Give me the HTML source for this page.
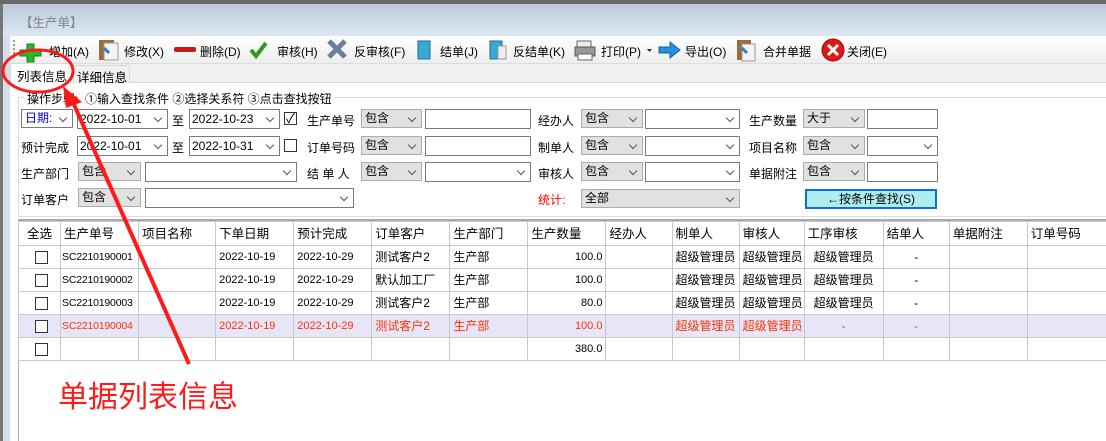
<!DOCTYPE html>
<html><head><style>
body{margin:0;width:1106px;height:441px;overflow:hidden;background:#fff;font-family:"Liberation Sans","Noto Sans CJK SC",sans-serif;font-size:12px;color:#000;position:relative}
.a{position:absolute;white-space:nowrap}
.sel{position:absolute;height:19px;border:1px solid #adadad;background:#e1e1e1;box-sizing:border-box;padding-left:3px;line-height:17px}
.box{position:absolute;height:20px;border:1px solid #7a7a7a;background:#fff;box-sizing:border-box;padding-left:2px;line-height:18px}
.dd:after{content:"";position:absolute;right:6px;top:5px;width:5px;height:5px;border-right:1px solid #555;border-bottom:1px solid #555;transform:rotate(45deg)}
.cb{position:absolute;width:11px;height:11px;border:1px solid #333;background:#fff}
table{border-collapse:collapse;position:absolute;left:18px;top:221px;table-layout:fixed;width:1091px;font-size:12px}
td{border:1px solid #c8c8c8;height:22px;padding:0 3px;white-space:nowrap;overflow:hidden;line-height:22px;box-sizing:border-box}
tr.h td{height:24px;font-size:12.5px}
.r td{color:#ff3300;background:#e6e6f8}
.n{text-align:right;font-size:11px}
.m{font-size:11px}
.s{font-size:10.5px;padding:0 1px;letter-spacing:-0.2px}
</style></head><body>
<div class="a" style="left:0;top:0;width:1106px;height:4px;background:#6a6a6a"></div>
<div class="a" style="left:0;top:4px;width:1106px;height:32px;background:linear-gradient(#bccadb,#dde7f2)"></div>
<div class="a" style="left:0;top:4px;width:3px;height:437px;background:#777"></div>
<div class="a" style="left:3px;top:36px;width:7px;height:405px;background:#d4e0ee"></div>
<div class="a" style="left:20px;top:12px;color:#7d8590;font-size:12.5px">【生产单】</div>
<div class="a" style="left:10px;top:36px;width:1096px;height:27px;background:linear-gradient(#fff,#eeeeee);border-bottom:1px solid #ddd"></div>
<div class="a" style="left:13px;top:40px;width:2px;height:18px;border-left:2px dotted #999"></div>
<svg class="a" style="left:0;top:36px" width="1106" height="27">
<path d="M27 8h7v6h7v6h-7v6h-7v-6h-7v-6h7z" fill="#28b828" stroke="#137d13"/>
<rect x="99" y="4" width="15" height="20" fill="#9a6b3b"/><rect x="104" y="7" width="14" height="17" fill="#f4f4f4" stroke="#999"/><path d="M104 12l5 5" stroke="#2a7fd0" stroke-width="3"/>
<rect x="174" y="11" width="22" height="5" rx="2" fill="#c81818"/>
<path d="M251 14l5 6 10-13" stroke="#2f9a1e" stroke-width="4" fill="none"/>
<path d="M329 5l16 16M345 5l-16 16" stroke="#6a8099" stroke-width="5"/>
<rect x="418" y="5" width="12" height="18" fill="#3aaad4" stroke="#1d6f92"/>
<rect x="490" y="5" width="12" height="18" fill="#3aaad4" stroke="#1d6f92"/><rect x="498" y="10" width="8" height="13" fill="#eee" stroke="#999"/>
<rect x="577" y="5" width="14" height="7" fill="#eee" stroke="#666"/><rect x="575" y="11" width="20" height="9" fill="#999" stroke="#555"/><rect x="578" y="18" width="14" height="6" fill="#fff" stroke="#666"/>
<path d="M647 13h5l-2.5 3z" fill="#333"/>
<path d="M659 11h11v-5l10 8-10 8v-5h-11z" fill="#2b8fe0" stroke="#1360a8"/>
<rect x="737" y="4" width="14" height="20" fill="#9a6b3b"/><rect x="742" y="8" width="13" height="17" fill="#f4f4f4" stroke="#999"/><path d="M742 12l5 5" stroke="#2a7fd0" stroke-width="3"/>
<circle cx="833" cy="14" r="11" fill="#e01818" stroke="#9a0c0c"/><path d="M828 9l10 10M838 9l-10 10" stroke="#fff" stroke-width="3"/>
</svg>
<div class="a" style="left:49px;top:43px">增加(A)</div>
<div class="a" style="left:124px;top:43px">修改(X)</div>
<div class="a" style="left:200px;top:43px">删除(D)</div>
<div class="a" style="left:277px;top:43px">审核(H)</div>
<div class="a" style="left:354px;top:43px">反审核(F)</div>
<div class="a" style="left:440px;top:43px">结单(J)</div>
<div class="a" style="left:513px;top:43px">反结单(K)</div>
<div class="a" style="left:601px;top:43px">打印(P)</div>
<div class="a" style="left:685px;top:43px">导出(O)</div>
<div class="a" style="left:763px;top:43px">合并单据</div>
<div class="a" style="left:847px;top:43px">关闭(E)</div>
<div class="a" style="left:10px;top:64px;width:1096px;height:18px;background:#f0f0f0;border-bottom:1px solid #d9d9d9"></div>
<div class="a" style="left:10px;top:63px;width:62px;height:20px;background:#fff;border:1px solid #d9d9d9;border-bottom:none"></div>
<div class="a" style="left:17px;top:66px;font-size:12.5px">列表信息</div>
<div class="a" style="left:73px;top:65px;width:55px;height:17px;background:#f0f0f0;border:1px solid #d9d9d9;border-bottom:none"></div>
<div class="a" style="left:77px;top:67px;font-size:12.5px">详细信息</div>
<div class="a" style="left:18px;top:97px;width:1088px;height:118px;border:1px solid #dcdcdc;border-right:none"></div>
<div class="a" style="left:24px;top:90px;background:#fff;padding:0 3px">操作步骤:&nbsp;&nbsp;①输入查找条件 ②选择关系符 ③点击查找按钮</div>
<!-- row1 -->
<div class="sel dd" style="left:21px;top:109px;width:52px;background:#fff;color:#0000e0;border-color:#7a7a7a">日期:</div>
<div class="box dd" style="left:77px;top:109px;width:91px">2022-10-01</div>
<div class="a" style="left:172px;top:112px">至</div>
<div class="box dd" style="left:189px;top:109px;width:91px">2022-10-23</div>
<div class="cb" style="left:284px;top:112px"></div><div class="a" style="left:286px;top:108px;font-size:13px">✓</div>
<div class="a" style="left:307px;top:112px">生产单号</div>
<div class="sel dd" style="left:361px;top:109px;width:61px">包含</div>
<div class="box" style="left:425px;top:109px;width:106px"></div>
<div class="a" style="left:538px;top:112px">经办人</div>
<div class="sel dd" style="left:581px;top:109px;width:62px">包含</div>
<div class="box dd" style="left:645px;top:109px;width:95px"></div>
<div class="a" style="left:749px;top:112px">生产数量</div>
<div class="sel dd" style="left:803px;top:109px;width:62px">大于</div>
<div class="box" style="left:867px;top:109px;width:71px"></div>
<!-- row2 -->
<div class="a" style="left:21px;top:139px">预计完成</div>
<div class="box dd" style="left:77px;top:136px;width:91px">2022-10-01</div>
<div class="a" style="left:172px;top:139px">至</div>
<div class="box dd" style="left:189px;top:136px;width:91px">2022-10-31</div>
<div class="cb" style="left:284px;top:139px"></div>
<div class="a" style="left:307px;top:139px">订单号码</div>
<div class="sel dd" style="left:361px;top:136px;width:61px">包含</div>
<div class="box" style="left:425px;top:136px;width:106px"></div>
<div class="a" style="left:538px;top:139px">制单人</div>
<div class="sel dd" style="left:581px;top:136px;width:62px">包含</div>
<div class="box dd" style="left:645px;top:136px;width:95px"></div>
<div class="a" style="left:749px;top:139px">项目名称</div>
<div class="sel dd" style="left:803px;top:136px;width:62px">包含</div>
<div class="box dd" style="left:867px;top:136px;width:71px"></div>
<!-- row3 -->
<div class="a" style="left:21px;top:165px">生产部门</div>
<div class="sel dd" style="left:78px;top:162px;width:63px">包含</div>
<div class="box dd" style="left:145px;top:162px;width:152px"></div>
<div class="a" style="left:307px;top:165px">结 单 人</div>
<div class="sel dd" style="left:361px;top:162px;width:61px">包含</div>
<div class="box dd" style="left:425px;top:162px;width:106px"></div>
<div class="a" style="left:538px;top:165px">审核人</div>
<div class="sel dd" style="left:581px;top:162px;width:62px">包含</div>
<div class="box dd" style="left:645px;top:162px;width:95px"></div>
<div class="a" style="left:749px;top:165px">单据附注</div>
<div class="sel dd" style="left:803px;top:162px;width:62px">包含</div>
<div class="box" style="left:867px;top:162px;width:71px"></div>
<!-- row4 -->
<div class="a" style="left:21px;top:191px">订单客户</div>
<div class="sel dd" style="left:78px;top:188px;width:63px">包含</div>
<div class="box dd" style="left:145px;top:188px;width:209px"></div>
<div class="a" style="left:538px;top:191px;color:#f00">统计:</div>
<div class="sel dd" style="left:581px;top:189px;width:159px">全部</div>
<div class="a" style="left:805px;top:189px;width:132px;height:20px;box-sizing:border-box;border:2px solid #0a6fd6;background:#aeeef0;text-align:center;line-height:16px">←按条件查找(S)</div>
<div class="a" style="left:18px;top:219px;width:1088px;height:2px;background:#aaa"></div>
<div class="a" style="left:18px;top:221px;width:1px;height:220px;background:#aaa"></div>
<table>
<colgroup><col style="width:42px"><col style="width:78px"><col style="width:77px"><col style="width:78px"><col style="width:78px"><col style="width:78px"><col style="width:78px"><col style="width:78px"><col style="width:66px"><col style="width:67px"><col style="width:65px"><col style="width:79px"><col style="width:66px"><col style="width:78px"><col style="width:81px"></colgroup>
<tr class="h"><td style="text-align:center">全选</td><td>生产单号</td><td>项目名称</td><td>下单日期</td><td>预计完成</td><td>订单客户</td><td>生产部门</td><td>生产数量</td><td>经办人</td><td>制单人</td><td>审核人</td><td>工序审核</td><td>结单人</td><td>单据附注</td><td>订单号码</td></tr>
<tr><td><div class="cb" style="position:relative;margin-left:13px"></div></td><td class="s">SC2210190001</td><td></td><td class="m">2022-10-19</td><td class="m">2022-10-29</td><td>测试客户2</td><td>生产部</td><td class="n">100.0</td><td></td><td>超级管理员</td><td>超级管理员</td><td style="text-align:center">超级管理员</td><td style="text-align:center">-</td><td></td><td></td></tr>
<tr><td><div class="cb" style="position:relative;margin-left:13px"></div></td><td class="s">SC2210190002</td><td></td><td class="m">2022-10-19</td><td class="m">2022-10-29</td><td>默认加工厂</td><td>生产部</td><td class="n">100.0</td><td></td><td>超级管理员</td><td>超级管理员</td><td style="text-align:center">超级管理员</td><td style="text-align:center">-</td><td></td><td></td></tr>
<tr><td><div class="cb" style="position:relative;margin-left:13px"></div></td><td class="s">SC2210190003</td><td></td><td class="m">2022-10-19</td><td class="m">2022-10-29</td><td>测试客户2</td><td>生产部</td><td class="n">80.0</td><td></td><td>超级管理员</td><td>超级管理员</td><td style="text-align:center">超级管理员</td><td style="text-align:center">-</td><td></td><td></td></tr>
<tr class="r"><td><div class="cb" style="position:relative;margin-left:13px"></div></td><td class="s">SC2210190004</td><td></td><td class="m">2022-10-19</td><td class="m">2022-10-29</td><td>测试客户2</td><td>生产部</td><td class="n">100.0</td><td></td><td>超级管理员</td><td>超级管理员</td><td style="text-align:center">-</td><td style="text-align:center">-</td><td></td><td></td></tr>
<tr><td><div class="cb" style="position:relative;margin-left:13px"></div></td><td></td><td></td><td></td><td></td><td></td><td></td><td class="n">380.0</td><td></td><td></td><td></td><td></td><td></td><td></td><td></td></tr>
</table>
<div class="a" style="left:58px;top:372px;color:#ff1a1a;font-size:30px">单据列表信息</div>
<svg class="a" style="left:0;top:0" width="1106" height="441">
<ellipse cx="38" cy="71" rx="35" ry="21" fill="none" stroke="#ff1a1a" stroke-width="3"/>
<line x1="189" y1="364" x2="72" y2="100" stroke="#ff1a1a" stroke-width="4"/>
<path d="M63 86l19 16-16 6z" fill="#ff1a1a"/>
</svg>
</body></html>
